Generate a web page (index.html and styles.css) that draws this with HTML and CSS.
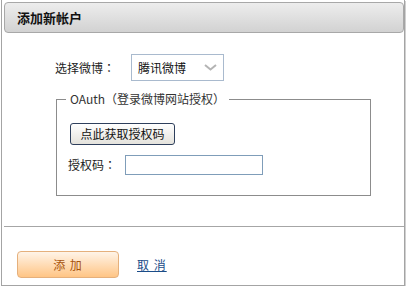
FILE: index.html
```html
<!DOCTYPE html>
<html lang="zh-CN">
<head>
<meta charset="utf-8">
<title>添加新帐户</title>
<link rel="stylesheet" href="styles.css">
</head>
<body>
<div class="dialog">
  <div class="header"><h1 class="title">添加新帐户</h1></div>
  <div class="content">
    <div class="row-select">
      <label class="label-weibo">选择微博<span class="punct" lang="zh-TW">：</span></label>
      <div class="select">
        <span class="select-text">腾讯微博</span>
        <svg class="chevron" width="13" height="7" viewBox="0 0 13 7"><polyline points="1,1 6.5,5.5 12,1" fill="none" stroke="#b4b4b4" stroke-width="2"/></svg>
      </div>
    </div>
    <fieldset class="oauth">
      <legend class="oauth-legend">OAuth<span class="punct" lang="zh-TW">（</span>登录微博网站授权<span class="punct" lang="zh-TW">）</span></legend>
      <div class="oauth-inner">
        <button class="btn-auth" type="button">点此获取授权码</button>
        <div class="row-code">
          <label class="label-code">授权码<span class="punct" lang="zh-TW">：</span></label>
          <input class="code-input" type="text">
        </div>
      </div>
    </fieldset>
  </div>
  <div class="sep"></div>
  <div class="footer">
    <button class="btn-add" type="button">添 加</button>
    <a class="cancel" href="#">取 消</a>
  </div>
</div>
</body>
</html>
```
FILE: styles.css
```css
html, body {
  margin: 0;
  padding: 0;
  background: #fff;
}
body {
  font-family: "Noto Sans CJK SC", "Liberation Sans", sans-serif;
  font-size: 12px;
  color: #222;
}
.punct {
  font-family: "Noto Sans CJK TC", "Noto Sans CJK SC", sans-serif;
}
.dialog {
  box-sizing: border-box;
  margin-left: 1px;
  width: 404px;
  height: 286px;
  border: 1px solid #a4a4a4;
  border-top: 0;
  box-shadow: 1px 1px 0 #d0d0d0;
  display: flex;
  flex-direction: column;
}
.header {
  box-sizing: border-box;
  margin: 2px 0 0 2px;
  height: 31px;
  border: 1px solid #a8a8a8;
  border-radius: 4px;
  background: linear-gradient(#ededed, #d2d2d2);
  display: flex;
  align-items: center;
  padding-left: 12px;
}
.title {
  margin: 0;
  font-size: 13px;
  font-weight: bold;
  color: #111;
  line-height: 16px;
}
.content {
  display: flex;
  flex-direction: column;
}
.row-select {
  margin-top: 21px;
  padding-left: 53px;
  display: flex;
  align-items: center;
}
.label-weibo {
  width: 76px;
  line-height: 16px;
}
.select {
  box-sizing: border-box;
  width: 93px;
  height: 27px;
  border: 1px solid #a9bace;
  display: flex;
  align-items: center;
  justify-content: space-between;
  padding: 0 6px 0 6px;
}
.select-text {
  line-height: 16px;
  color: #111;
}
.chevron {
  display: block;
}
.oauth {
  box-sizing: border-box;
  margin: 10px 0 0 54px;
  width: 315px;
  padding: 0;
  border: 1px solid #8c8c8c;
  min-width: 0;
}
.oauth-legend {
  margin-left: 9px;
  padding: 0 4px;
  line-height: 16px;
  color: #333;
}
.oauth-inner {
  padding: 16px 0 20px 11px;
  display: flex;
  flex-direction: column;
  align-items: flex-start;
}
.btn-auth {
  box-sizing: border-box;
  margin: 0 0 0 2px;
  width: 105px;
  height: 22px;
  padding: 0;
  border: 1px solid #2e3f5c;
  border-radius: 3px;
  background: linear-gradient(#ffffff, #e4e2dc);
  font-family: inherit;
  font-size: 12px;
  color: #111;
  line-height: 16px;
}
.row-code {
  margin-top: 10px;
  display: flex;
  align-items: center;
}
.label-code {
  width: 57px;
  line-height: 16px;
}
.code-input {
  box-sizing: border-box;
  width: 138px;
  height: 20px;
  margin: 0;
  padding: 0 3px;
  border: 1px solid #7f9db9;
  font-family: inherit;
  font-size: 12px;
}
.sep {
  margin: 30px 0 0 2px;
  height: 1px;
  background: #a6a6a6;
}
.footer {
  margin-top: 24px;
  padding-left: 15px;
  display: flex;
  align-items: center;
}
.btn-add {
  box-sizing: border-box;
  width: 102px;
  height: 27px;
  padding: 0;
  border: 1px solid #e5b07c;
  border-radius: 4px;
  background: linear-gradient(#fff4e8, #ffc585);
  font-family: inherit;
  font-size: 12px;
  color: #a8540c;
  line-height: 16px;
  letter-spacing: 1px;
}
.cancel {
  margin-left: 18px;
  color: #1a4c88;
  text-decoration: underline;
  line-height: 16px;
  letter-spacing: 1px;
}
```
